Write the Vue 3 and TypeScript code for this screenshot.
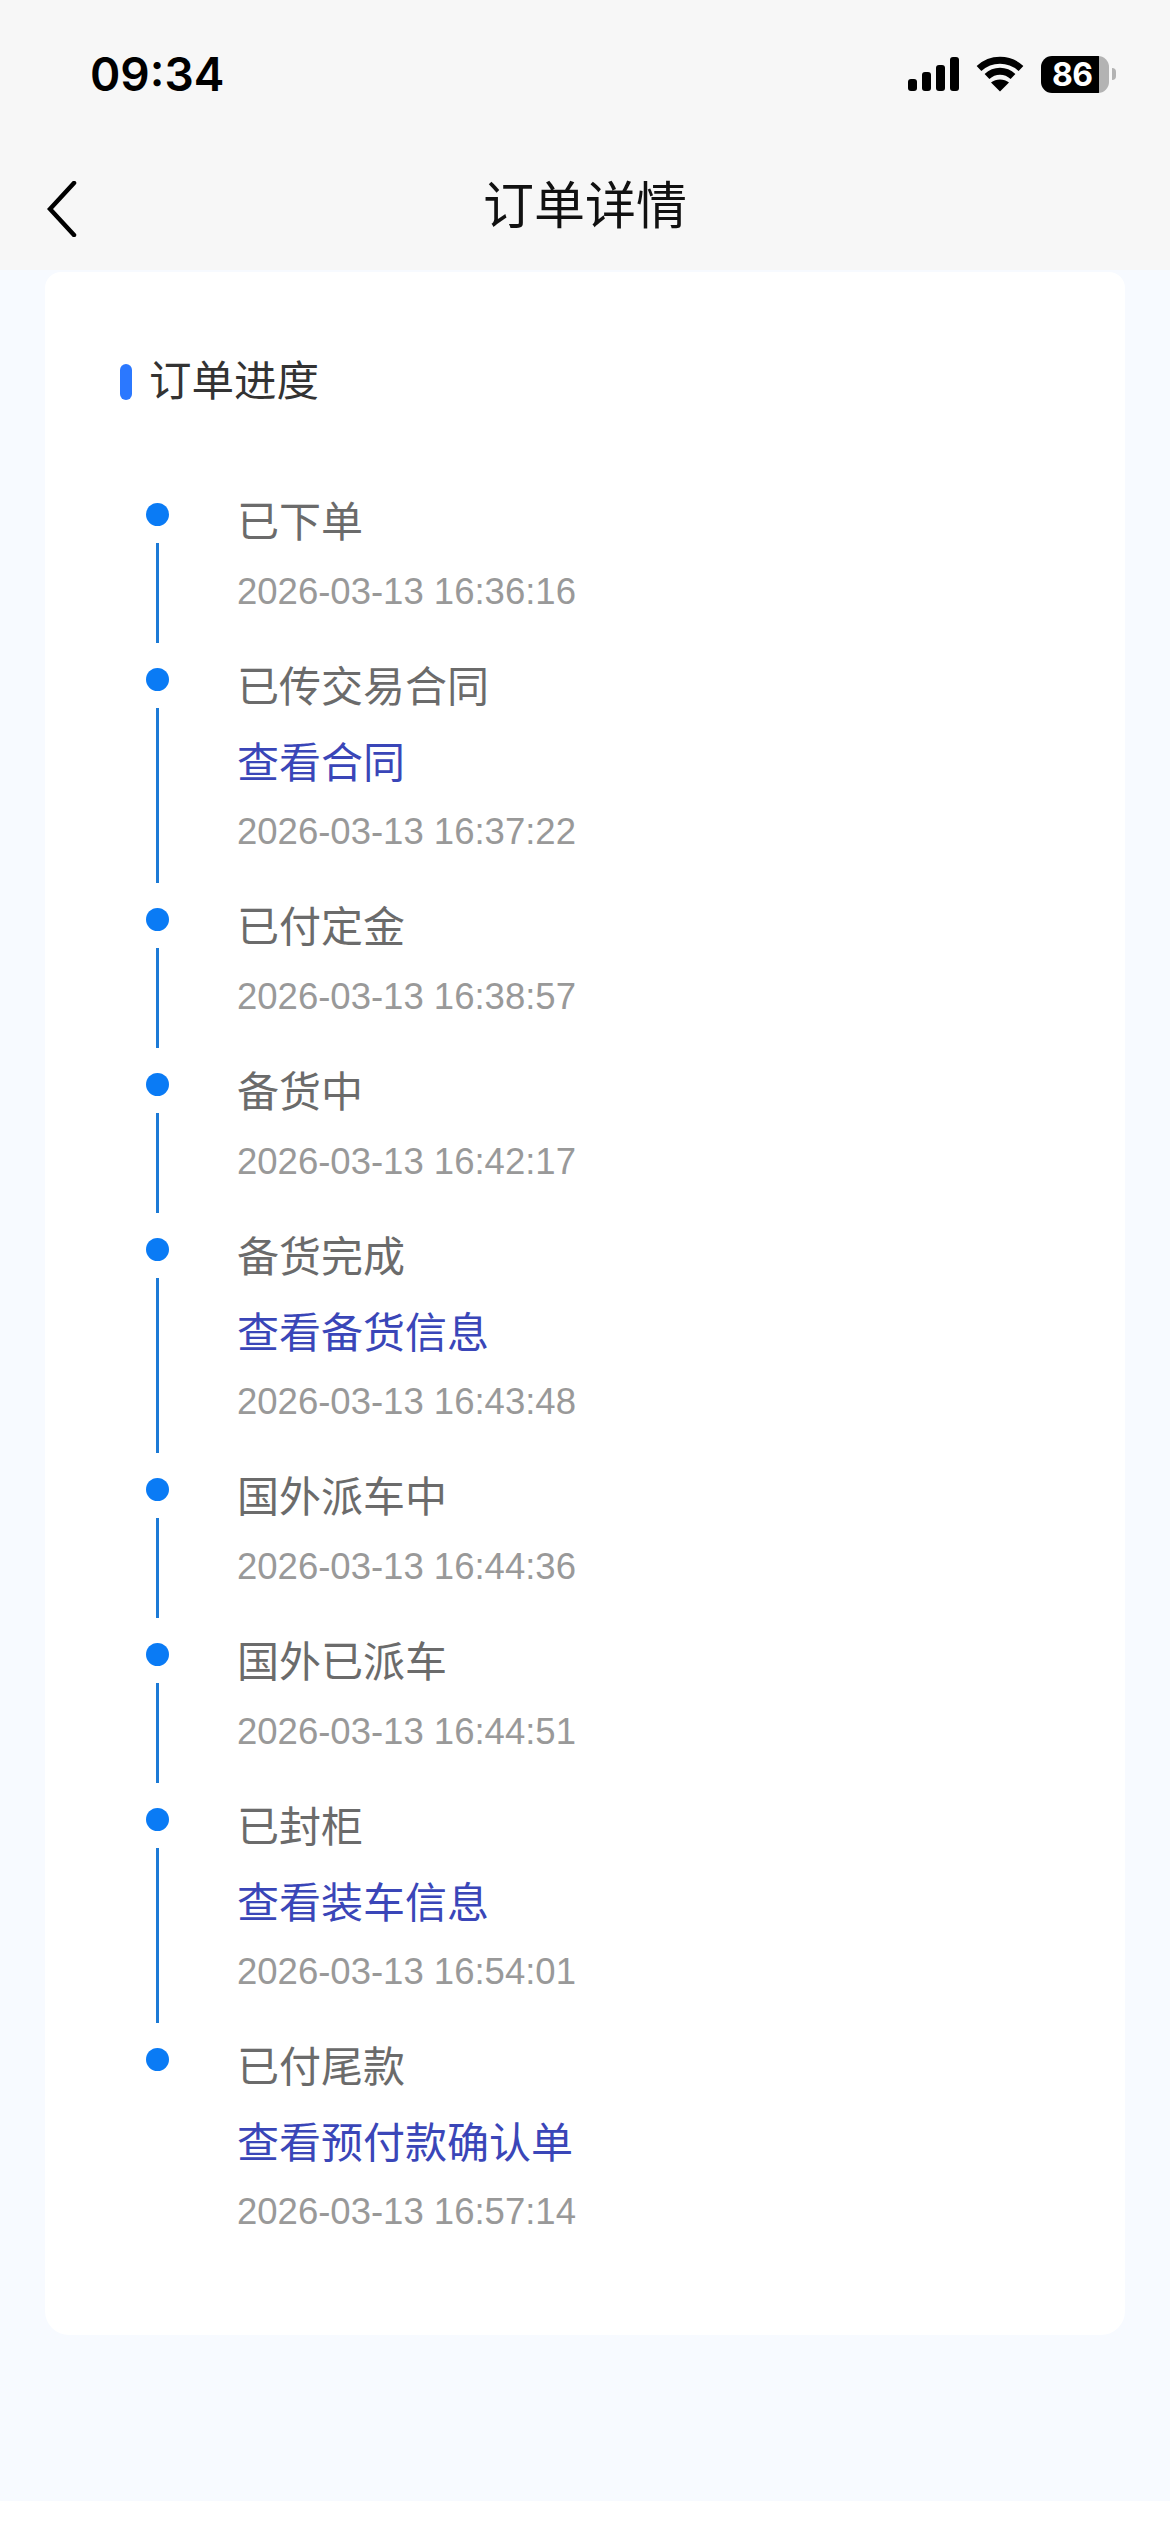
<script setup lang="ts">
interface Step {
  title: string;
  link?: string;
  time: string;
}

const steps: Step[] = [
  { title: '已下单', time: '2026-03-13 16:36:16' },
  { title: '已传交易合同', link: '查看合同', time: '2026-03-13 16:37:22' },
  { title: '已付定金', time: '2026-03-13 16:38:57' },
  { title: '备货中', time: '2026-03-13 16:42:17' },
  { title: '备货完成', link: '查看备货信息', time: '2026-03-13 16:43:48' },
  { title: '国外派车中', time: '2026-03-13 16:44:36' },
  { title: '国外已派车', time: '2026-03-13 16:44:51' },
  { title: '已封柜', link: '查看装车信息', time: '2026-03-13 16:54:01' },
  { title: '已付尾款', link: '查看预付款确认单', time: '2026-03-13 16:57:14' },
];
</script>

<template>
  <div class="page">
    <header class="top">
      <div class="status">
        <span class="clock">09:34</span>
        <div class="status-icons">
          <svg class="signal" width="52" height="34" viewBox="0 0 52 34">
            <rect x="0" y="22" width="9" height="12" rx="3" />
            <rect x="14" y="15" width="9" height="19" rx="3" />
            <rect x="28" y="8" width="9" height="26" rx="3" />
            <rect x="42" y="0" width="9" height="34" rx="3" />
          </svg>
          <svg class="wifi" width="48" height="36" viewBox="0 0 48 36">
            <path d="M3 12.5C15 1.5 33 1.5 45 12.5" />
            <path d="M11 20.5C18.5 13.5 29.5 13.5 37 20.5" />
            <path class="wifi-tip" d="M24 35.5L15 26.5C20 22.5 28 22.5 33 26.5Z" />
          </svg>
          <div class="battery"><span>86</span></div>
          <i class="battery-tip"></i>
        </div>
      </div>
      <nav class="nav">
        <svg class="back" width="30" height="56" viewBox="0 0 30 56">
          <path d="M27 2L3 28L27 54" />
        </svg>
        <h1>订单详情</h1>
      </nav>
    </header>

    <main class="content">
      <section class="card">
        <h2 class="section-title">订单进度</h2>
        <ul class="timeline">
          <li v-for="(step, i) in steps" :key="step.time" class="step">
            <div class="axis">
              <i class="dot"></i>
              <i v-if="i < steps.length - 1" class="line"></i>
            </div>
            <div class="info">
              <p class="name">{{ step.title }}</p>
              <a v-if="step.link" class="link">{{ step.link }}</a>
              <p class="time">{{ step.time }}</p>
            </div>
          </li>
        </ul>
      </section>
    </main>
    <div class="home-strip"></div>
  </div>
</template>

<style scoped>
.page {
  width: 1170px;
  height: 2532px;
  display: flex;
  flex-direction: column;
  background: #f7faff;
  font-family: "Liberation Sans", "Noto Sans CJK SC", sans-serif;
}

.top {
  height: 270px;
  flex-shrink: 0;
  background: #f7f7f7;
  color: #000;
}
.status {
  height: 99px;
  padding: 0 54px 0 90px;
  display: flex;
  align-items: flex-end;
  justify-content: space-between;
}
.clock {
  font-family: Inter, "Liberation Sans", sans-serif;
  font-size: 46px;
  font-weight: 600;
  line-height: 50px;
}
.status-icons {
  display: flex;
  align-items: center;
  height: 38px;
  margin-bottom: 6px;
}
.signal {
  fill: #000;
  margin-right: 16px;
}
.wifi {
  margin-right: 17px;
}
.wifi path {
  fill: none;
  stroke: #000;
  stroke-width: 7;
}
.wifi .wifi-tip {
  fill: #000;
  stroke: none;
}
.battery {
  width: 68px;
  height: 37px;
  border-radius: 11px;
  background: linear-gradient(90deg, #000 86%, #b3b3b3 86%);
  display: flex;
  align-items: center;
  padding-left: 11px;
  box-sizing: border-box;
}
.battery span {
  color: #fff;
  font-family: Inter, "Liberation Sans", sans-serif;
  font-size: 32px;
  font-weight: 700;
  line-height: 37px;
  letter-spacing: -0.5px;
}
.battery-tip {
  width: 4px;
  height: 12px;
  margin-left: 3px;
  border-radius: 0 4px 4px 0;
  background: #b3b3b3;
}

.nav {
  height: 171px;
  box-sizing: border-box;
  padding: 44px 47px 0;
  display: grid;
  grid-template-columns: 1fr auto 1fr;
  align-items: center;
}
.back {
  margin-top: 4px;
  fill: none;
  stroke: #000;
  stroke-width: 4.5;
  stroke-linecap: round;
}
.nav h1 {
  margin: 0;
  font-size: 51px;
  font-weight: 400;
  color: #111;
  line-height: 60px;
}

.content {
  flex: 1;
  padding: 2px 45px 0;
}
.card {
  height: 2063px;
  box-sizing: border-box;
  padding: 82px 0 0 75px;
  background: #fff;
  border-radius: 16px 16px 24px 24px;
}
.section-title {
  margin: 0 0 82px;
  padding-left: 29px;
  position: relative;
  font-size: 42.5px;
  font-weight: 400;
  line-height: 56px;
  color: #333;
}
.section-title::before {
  content: "";
  position: absolute;
  left: 0;
  top: 10px;
  width: 12px;
  height: 36px;
  border-radius: 6px;
  background: #2b78ff;
}

.timeline {
  margin: 0;
  padding: 0 0 0 26px;
  list-style: none;
}
.step {
  display: flex;
}
.axis {
  width: 23px;
  margin-right: 68px;
  padding: 11px 0 14px;
  display: flex;
  flex-direction: column;
  align-items: center;
  flex-shrink: 0;
}
.dot {
  width: 23px;
  height: 23px;
  border-radius: 50%;
  background: #0a7bf5;
  flex-shrink: 0;
}
.line {
  width: 3px;
  flex: 1;
  margin-top: 17px;
  background: #1c7ad6;
}
.info {
  padding-bottom: 40px;
}
.name {
  margin: 0 0 14px;
  padding-top: 1px;
  font-size: 42px;
  line-height: 60px;
  color: #6b6b6b;
}
.link {
  display: block;
  margin: 16px 0 13px;
  font-size: 42px;
  line-height: 60px;
  color: #3a46b8;
}
.time {
  margin: 0;
  font-size: 36.5px;
  line-height: 50px;
  color: #999;
}
.name:has(+ .link) {
  margin-bottom: 0;
}

.home-strip {
  height: 31px;
  flex-shrink: 0;
  background: #fff;
}
</style>
